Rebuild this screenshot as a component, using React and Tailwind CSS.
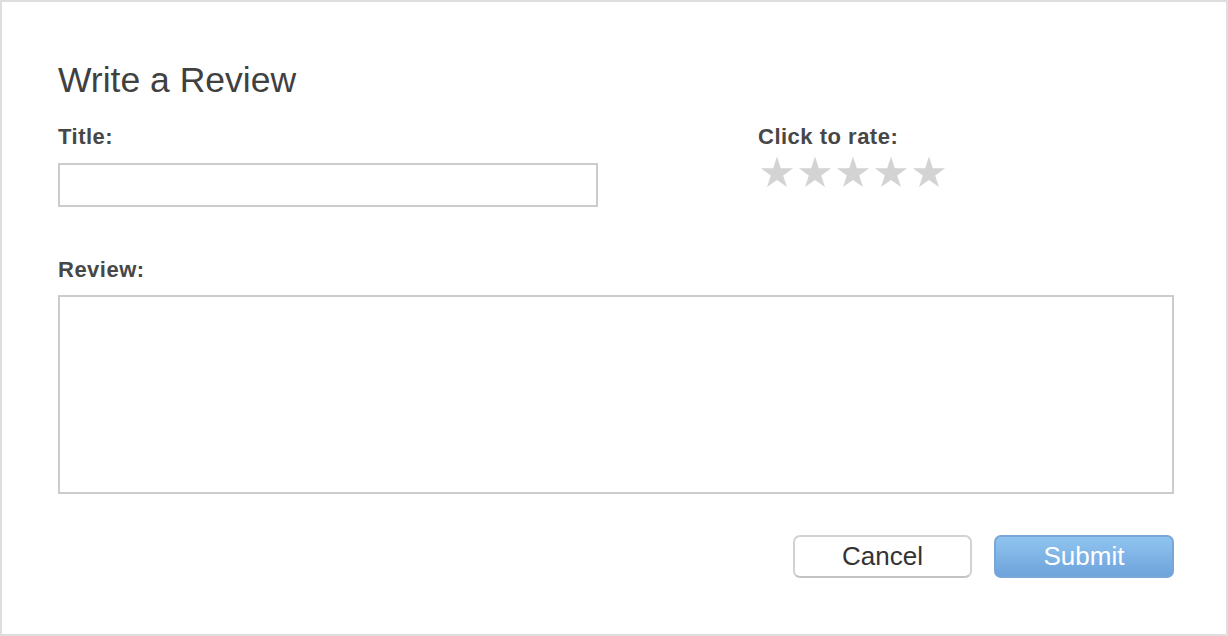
import React from 'react'

const Star = () => (
  <svg viewBox="0 0 36 34" className="w-[34px] h-[32px]" fill="#d3d3d3">
    <polygon points="18,0.5 22.06,12.92 35.12,12.94 24.56,20.63 28.58,33.06 18,25.4 7.42,33.06 11.44,20.63 0.88,12.94 13.94,12.92" />
  </svg>
)

const App = () => {
  const [rating, setRating] = React.useState(0)
  return (
    <div className="w-[1228px] h-[636px] border-2 border-[#dedede] bg-white pl-[56px] pt-[61px] font-['Liberation_Sans',Arial,sans-serif] text-[#444]">
      <h1 className="text-[35.5px] leading-none font-normal text-[#404040]">Write a Review</h1>

      <div className="flex mt-[27px]">
        <div className="w-[540px]">
          <label className="block text-[22px] leading-[22px] font-bold tracking-[0.5px] text-[#474747]">Title:</label>
          <input type="text" className="block mt-[15px] w-[540px] h-[44px] border-2 border-[#cccccc] outline-none px-2 text-[20px]" />
        </div>
        <div className="ml-[160px]">
          <div className="text-[22px] leading-[22px] font-bold tracking-[0.5px] text-[#474747]">Click to rate:</div>
          <div className="flex gap-[4px] mt-[8px] ml-[2px]">
            {[1, 2, 3, 4, 5].map((n) => (
              <button key={n} onClick={() => setRating(n)} className="block">
                <Star />
              </button>
            ))}
          </div>
        </div>
      </div>

      <label className="block mt-[52px] text-[22px] leading-[22px] font-bold tracking-[0.5px] text-[#474747]">Review:</label>
      <textarea className="block mt-[14px] w-[1116px] h-[199px] border-2 border-[#cccccc] outline-none resize-none p-2 text-[20px]" />

      <div className="flex justify-end gap-[22px] w-[1116px] mt-[41px]">
        <button className="w-[179px] h-[43px] rounded-[7px] border-2 border-[#d2d2d2] border-b-[#c4c4c4] bg-white text-[26px] leading-none text-[#333]">
          Cancel
        </button>
        <button className="w-[180px] h-[43px] rounded-[7px] border-2 border-[#78a6d6] bg-gradient-to-b from-[#90c4ef] to-[#6ea3dc] text-[26px] leading-none text-white">
          Submit
        </button>
      </div>
    </div>
  )
}

export default App
